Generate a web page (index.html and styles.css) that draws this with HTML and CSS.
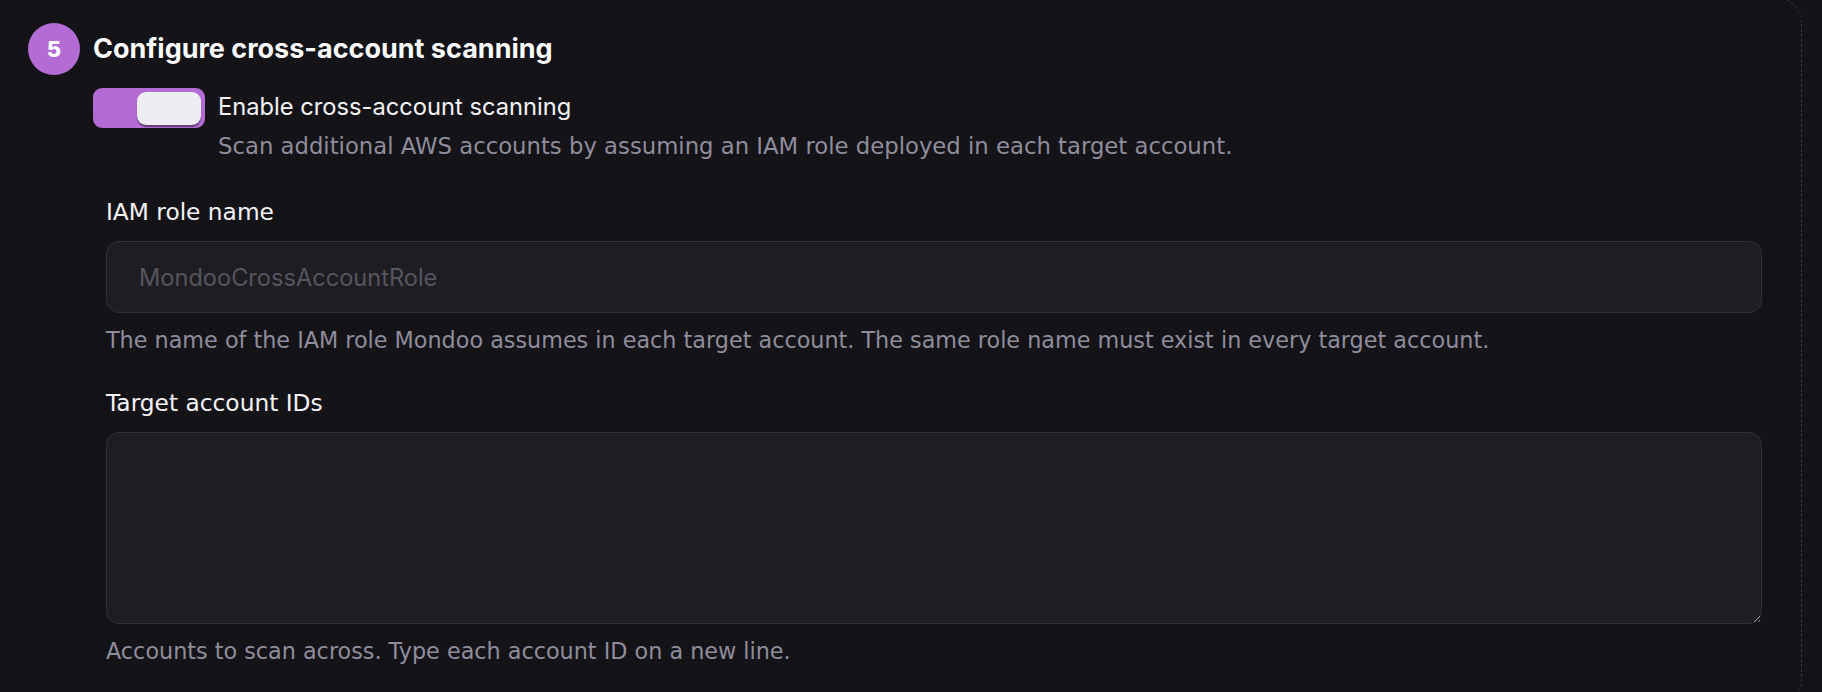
FILE: index.html
```html
<!DOCTYPE html>
<html lang="en">
<head>
<meta charset="utf-8">
<title>Configure cross-account scanning</title>
<link rel="stylesheet" href="styles.css">
</head>
<body>
<section class="step">
  <header class="step-head">
    <span class="step-num">5</span>
    <h2 class="step-title">Configure cross-account scanning</h2>
  </header>
  <div class="step-body">
    <label class="switch-row">
      <span class="switch is-on"><span class="switch-knob"></span></span>
      <span class="switch-text">
        <span class="switch-title">Enable cross-account scanning</span>
        <span class="switch-desc">Scan additional AWS accounts by assuming an IAM role deployed in each target account.</span>
      </span>
    </label>

    <div class="field">
      <label class="field-label" for="role-name">IAM role name</label>
      <input class="field-input" id="role-name" type="text" placeholder="MondooCrossAccountRole">
      <p class="field-hint">The name of the IAM role Mondoo assumes in each target account. The same role name must exist in every target account.</p>
    </div>

    <div class="field">
      <label class="field-label" for="account-ids">Target account IDs</label>
      <textarea class="field-input field-area" id="account-ids"></textarea>
      <p class="field-hint">Accounts to scan across. Type each account ID on a new line.</p>
    </div>
  </div>
</section>
</body>
</html>
```

FILE: styles.css
```css
html, body {
  margin: 0;
  height: 692px;
  overflow: hidden;
  background: #141318;
}

body {
  font-family: "DejaVu Sans", Verdana, sans-serif;
  color: #f1f0f5;
}

/* Step card: dashed outline, left edge runs past the viewport */
.step {
  box-sizing: border-box;
  width: 1842px;
  margin: -4px 0 0 -40px;
  padding: 26px 39px 40px 67px;
  border: 1px dashed #37363e;
  border-radius: 28px;
}

.step-head {
  display: flex;
  align-items: center;
  gap: 13px;
}

.step-num {
  display: flex;
  align-items: center;
  justify-content: center;
  width: 52px;
  height: 52px;
  border-radius: 50%;
  background: #b46cd5;
  color: #fff;
  font-family: Inter, "Liberation Sans", sans-serif;
  font-weight: 800;
  font-size: 22px;
}

.step-title {
  margin: 0;
  font-family: Inter, "Liberation Sans", sans-serif;
  font-weight: 700;
  font-size: 27px;
  line-height: 52px;
  color: #fbfbfd;
}

.step-body {
  padding-left: 65px;
}

/* Toggle switch */
.switch-row {
  display: flex;
  align-items: flex-start;
  gap: 13px;
  margin-top: 13px;
}

.switch {
  flex: none;
  box-sizing: border-box;
  display: flex;
  justify-content: flex-end;
  width: 112px;
  height: 40px;
  padding: 4px;
  border-radius: 9px;
  background: #b46cd5;
}

.switch-knob {
  width: 64px;
  height: 33px;
  border-radius: 9px;
  background: #eeedf2;
  box-shadow: 0 2px 1px rgba(30, 28, 36, 0.55);
}

.switch-text {
  display: flex;
  flex-direction: column;
  padding-top: 5px;
}

.switch-title {
  font-family: Inter, "Liberation Sans", sans-serif;
  font-size: 23.7px;
  line-height: 28px;
  color: #f4f3f7;
}

.switch-desc {
  margin-top: 11px;
  font-size: 22.75px;
  line-height: 28px;
  color: #8f8d9b;
}

/* Form fields */
.field {
  display: flex;
  flex-direction: column;
  margin-left: 13px;
  margin-top: 38px;
}

.field + .field {
  margin-top: 35px;
}

.field-label {
  font-size: 23.3px;
  line-height: 28px;
  color: #f4f3f7;
}

.field-input {
  box-sizing: border-box;
  margin-top: 15px;
  width: 100%;
  height: 72px;
  padding: 0 32px;
  border: 1px solid #303037;
  border-radius: 13px;
  background: #1d1d22;
  color: #e6e5ea;
  font-family: Inter, "Liberation Sans", sans-serif;
  font-size: 23.6px;
  outline: none;
}

.field-input::placeholder {
  color: #56555e;
}

.field-area {
  height: 192px;
  padding: 20px 32px;
  resize: vertical;
}

.field-hint {
  margin: 13px 0 0;
  font-size: 22.3px;
  line-height: 28px;
  color: #8f8d9b;
}
```
